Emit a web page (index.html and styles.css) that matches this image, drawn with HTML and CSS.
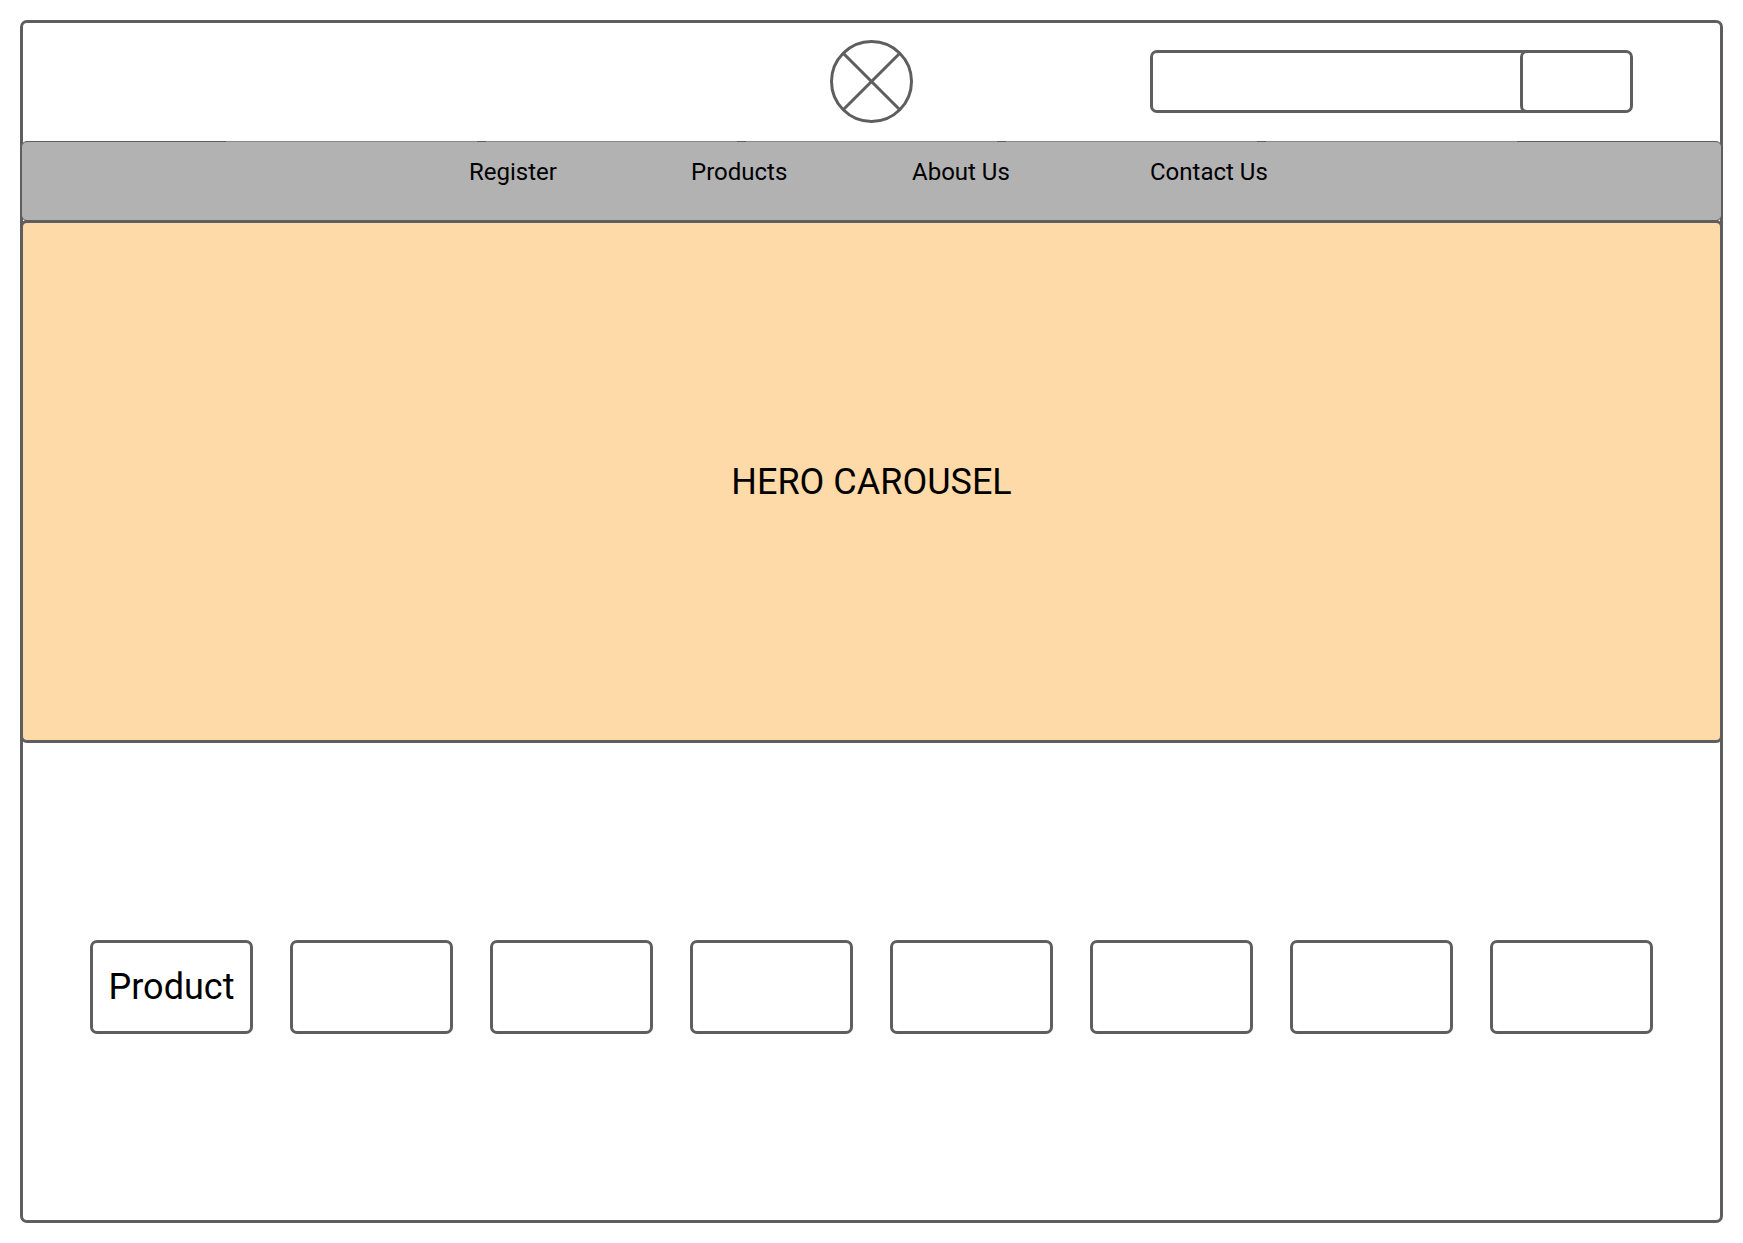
FILE: index.html
```html
<!DOCTYPE html>
<html lang="en">
<head>
<meta charset="utf-8">
<meta name="viewport" content="width=device-width, initial-scale=1">
<title>Home</title>
<link rel="stylesheet" href="styles.css">
</head>
<body>
<div class="page">
  <header class="header">
    <a class="logo" href="#" aria-label="Home">
      <svg class="logo-mark" viewBox="0 0 83 83" fill="none" stroke="currentColor" stroke-width="3" aria-hidden="true">
        <circle cx="41.500" cy="41.500" r="40"/>
        <path d="M13.200 13.200 69.800 69.800M69.800 13.200 13.200 69.800"/>
      </svg>
    </a>
    <form class="search" role="search">
      <input class="search-input" type="search" aria-label="Search">
      <button class="search-button" type="button" aria-label="Search"></button>
    </form>
  </header>
  <nav class="nav">
    <a class="nav-link" href="#">Register</a>
    <a class="nav-link" href="#">Products</a>
    <a class="nav-link" href="#">About Us</a>
    <a class="nav-link" href="#">Contact Us</a>
  </nav>
  <main>
    <section class="hero">
      <h1 class="hero-title">HERO CAROUSEL</h1>
    </section>
    <ul class="products">
      <li class="product">Product</li>
      <li class="product"></li>
      <li class="product"></li>
      <li class="product"></li>
      <li class="product"></li>
      <li class="product"></li>
      <li class="product"></li>
      <li class="product"></li>
    </ul>
  </main>
</div>
</body>
</html>
```
FILE: styles.css
```css
:root {
  --line: #5e5e5e;
  --border: 3px solid var(--line);
  --radius: 7px;
}

* {
  box-sizing: border-box;
}

body {
  margin: 0;
  padding: 20px;
  background: #fff;
  color: #000;
  font-family: Roboto, sans-serif;
}

.page {
  border: var(--border);
  border-radius: var(--radius);
}

.header {
  display: grid;
  grid-template-columns: 1fr auto 1fr;
  align-items: center;
  min-height: 118px;
  padding-bottom: 1px;
}

.logo {
  grid-column: 2;
  display: block;
  color: var(--line);
}

.logo-mark {
  display: block;
  width: 83px;
  height: 83px;
}

.search {
  display: flex;
  justify-self: end;
  margin-right: 87px;
}

.search-input,
.search-button {
  height: 63px;
  margin: 0;
  border: var(--border);
  border-radius: var(--radius);
  background: #fff;
  font: inherit;
}

.search-input {
  width: 402px;
  padding: 0 48px 0 16px;
  font-size: 24px;
  appearance: none;
}

/* The button sits over the right end of the text box. */
.search-button {
  position: relative;
  width: 113px;
  margin-left: -32px;
}

/* The bar overlaps the page outline by two pixels on each side. */
.nav {
  position: relative;
  display: grid;
  grid-template-columns: 222px 221px 238px 124px;
  justify-content: center;
  min-height: 80px;
  margin: 0 -2px;
  padding-top: 16px;
  border: 1px solid var(--line);
  border-radius: 6px;
  background: #b2b2b2;
}

/* Five lighter segments along the top edge, split by short dark ticks. */
.nav::before {
  content: "";
  position: absolute;
  top: -1px;
  left: calc(50% - 646px);
  width: 1291px;
  height: 1px;
  background: repeating-linear-gradient(90deg, #888 0 251px, var(--line) 251px 260px);
}

.nav-link {
  color: inherit;
  font-size: 24px;
  line-height: 28px;
  text-decoration: none;
}

.hero {
  position: relative;
  display: flex;
  align-items: center;
  justify-content: center;
  min-height: 523px;
  margin: -1px -3px 0;
  border: var(--border);
  border-radius: var(--radius);
  background: #ffdaa9;
}

.hero-title {
  margin: 0;
  font-size: 36px;
  font-weight: 400;
  line-height: 42px;
}

.products {
  display: grid;
  grid-template-columns: repeat(8, 1fr);
  gap: 37px;
  margin: 0;
  padding: 197px 67px 186px;
  list-style: none;
}

.product {
  display: flex;
  align-items: center;
  justify-content: center;
  min-width: 0;
  min-height: 94px;
  border: var(--border);
  border-radius: var(--radius);
  font-size: 36px;
  line-height: 42px;
}
```
